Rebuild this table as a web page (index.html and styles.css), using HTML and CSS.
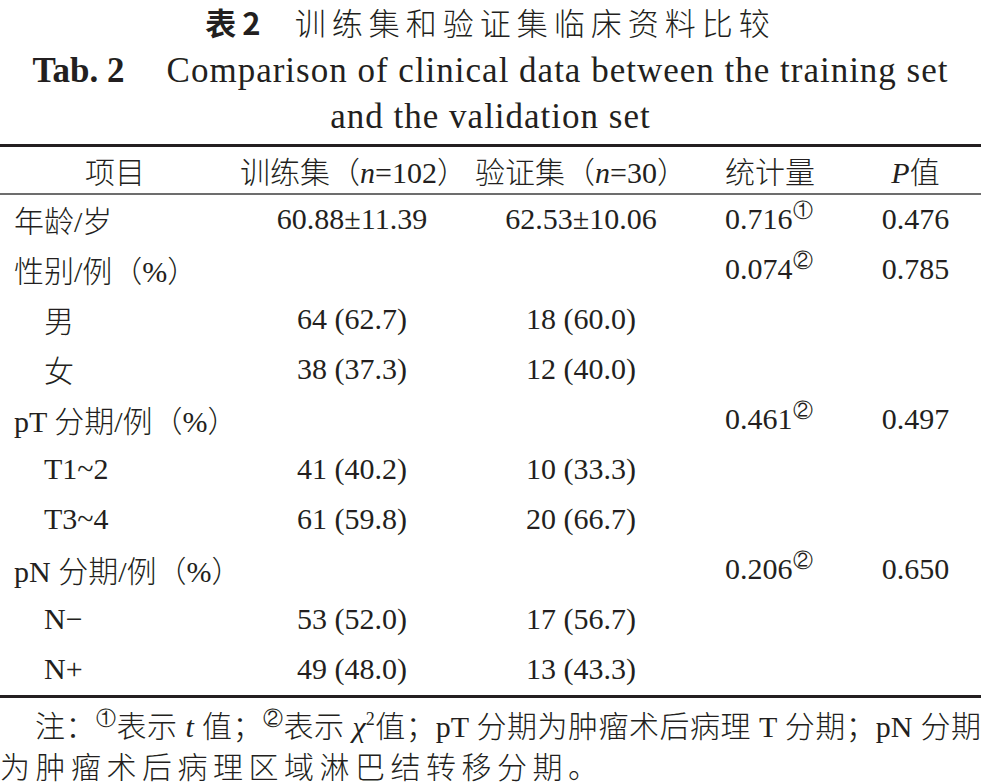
FILE: index.html
```html
<!DOCTYPE html>
<html lang="zh">
<head>
<meta charset="utf-8">
<link rel="stylesheet" href="styles.css">
</head>
<body>
<div class="page">
  <div class="caption-cn"><span class="tab-no">表2</span><span class="cn-title">训练集和验证集临床资料比较</span></div>
  <div class="caption-en"><span class="tab-no-en">Tab. 2</span>Comparison of clinical data between the training set<br>and the validation set</div>
  <table class="data">
    <colgroup>
      <col class="c1"><col class="c2"><col class="c3"><col class="c4"><col class="c5">
    </colgroup>
    <thead>
      <tr>
        <th class="item-h">项目</th>
        <th>训练集（<i>n</i>=102）</th>
        <th>验证集（<i>n</i>=30）</th>
        <th class="stat">统计量</th>
        <th><i>P</i>值</th>
      </tr>
    </thead>
    <tbody>
      <tr><td class="item">年龄/岁</td><td>60.88±11.39</td><td>62.53±10.06</td><td class="stat">0.716<sup>①</sup></td><td>0.476</td></tr>
      <tr><td class="item">性别/例（%）</td><td></td><td></td><td class="stat">0.074<sup>②</sup></td><td>0.785</td></tr>
      <tr><td class="item sub">男</td><td>64 (62.7)</td><td>18 (60.0)</td><td class="stat"></td><td></td></tr>
      <tr><td class="item sub">女</td><td>38 (37.3)</td><td>12 (40.0)</td><td class="stat"></td><td></td></tr>
      <tr><td class="item">pT 分期/例（%）</td><td></td><td></td><td class="stat">0.461<sup>②</sup></td><td>0.497</td></tr>
      <tr><td class="item sub">T1~2</td><td>41 (40.2)</td><td>10 (33.3)</td><td class="stat"></td><td></td></tr>
      <tr><td class="item sub">T3~4</td><td>61 (59.8)</td><td>20 (66.7)</td><td class="stat"></td><td></td></tr>
      <tr><td class="item">pN 分期/例（%）</td><td></td><td></td><td class="stat">0.206<sup>②</sup></td><td>0.650</td></tr>
      <tr><td class="item sub">N−</td><td>53 (52.0)</td><td>17 (56.7)</td><td class="stat"></td><td></td></tr>
      <tr><td class="item sub">N+</td><td>49 (48.0)</td><td>13 (43.3)</td><td class="stat"></td><td></td></tr>
    </tbody>
  </table>
  <div class="note">
    <span class="note-l1">注：<sup>①</sup>表示 <i>t</i> 值；<sup>②</sup>表示 <i>χ</i><sup class="sq">2</sup>值；pT 分期为肿瘤术后病理 T 分期；pN 分期</span>
    <span class="note-l2">为肿瘤术后病理区域淋巴结转移分期。</span>
  </div>
</div>
</body>
</html>
```
FILE: styles.css
```css
html, body {
  margin: 0;
  padding: 0;
  background: #fff;
}
.page {
  width: 981px;
  color: #231f20;
  font-family: "Liberation Serif", "Noto Sans CJK SC", serif;
}
.caption-cn {
  text-align: center;
  font-family: "Noto Sans CJK SC", sans-serif;
  font-size: 31px;
  line-height: 44px;
  letter-spacing: 6px;
}
.tab-no {
  font-weight: 700;
  letter-spacing: 6px;
  margin-right: 28px;
}
.cn-title {
  font-weight: 300;
}
.caption-en {
  text-align: center;
  font-size: 35px;
  line-height: 46px;
  letter-spacing: 1px;
  margin-top: 4px;
}
.tab-no-en {
  font-weight: 700;
  letter-spacing: 0;
  margin-right: 42px;
}
.data {
  margin-top: 4px;
  width: 981px;
  border-collapse: collapse;
  table-layout: fixed;
  font-size: 30px;
  font-weight: 300;
  border-top: 3px solid #231f20;
  border-bottom: 3px solid #231f20;
}
.c1 { width: 240px; }
.c2 { width: 224px; }
.c3 { width: 234px; }
.c4 { width: 152px; }
.c5 { width: 131px; }
.data th {
  font-weight: 300;
  height: 46px;
  padding: 0;
  text-align: center;
  border-bottom: 2px solid #6d6d6d;
  white-space: nowrap;
}
.data td {
  height: 48px;
  padding: 0 0 2px;
  text-align: center;
  white-space: nowrap;
}
.data th.item-h {
  padding-right: 10px;
}
.data td.item {
  text-align: left;
  padding-left: 14px;
}
.data td.item.sub {
  padding-left: 44px;
}
.data .stat {
  text-align: left;
  padding-left: 27px;
}
.data sup {
  font-size: 20px;
  vertical-align: 12px;
  line-height: 0;
  font-family: "DejaVu Sans", sans-serif;
  font-weight: 300;
}
.note {
  font-size: 30px;
  line-height: 41px;
  margin-top: 8px;
  font-weight: 300;
}
.note-l1 {
  display: block;
  padding-left: 35px;
  text-align: justify;
  text-align-last: justify;
}
.note-l2 {
  display: block;
  letter-spacing: 5.5px;
}
.note sup {
  font-size: 20px;
  vertical-align: 12px;
  line-height: 0;
  font-family: "DejaVu Sans", sans-serif;
}
.note sup.sq {
  font-family: "Liberation Serif", serif;
  font-size: 18px;
}
```
